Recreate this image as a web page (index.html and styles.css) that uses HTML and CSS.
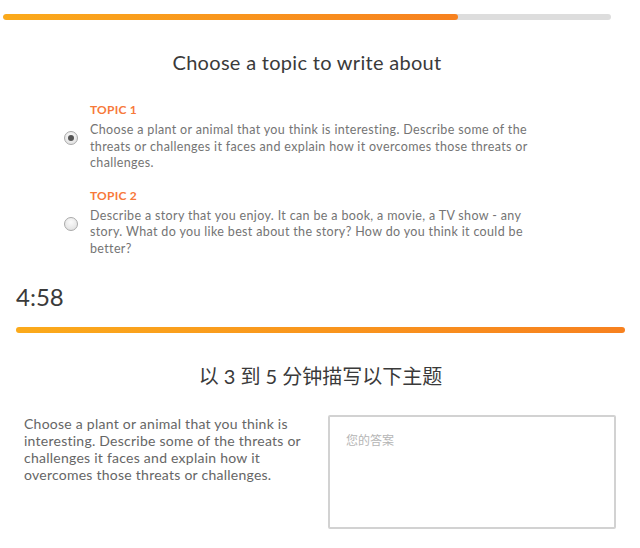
FILE: index.html
```html
<!DOCTYPE html>
<html lang="zh">
<head>
<meta charset="utf-8">
<title>Writing task</title>
<link rel="stylesheet" href="styles.css">
</head>
<body>
<section class="chooser">
  <div class="progress"><div class="progress-fill" style="width: 455px"></div></div>
  <h1 class="title">Choose a topic to write about</h1>
  <div class="topics">
    <label class="topic">
      <span class="topic-label">TOPIC 1</span>
      <span class="radio checked"></span>
      <span class="topic-text">Choose a plant or animal that you think is interesting. Describe some of the threats or challenges it faces and explain how it overcomes those threats or challenges.</span>
    </label>
    <label class="topic">
      <span class="topic-label">TOPIC 2</span>
      <span class="radio"></span>
      <span class="topic-text">Describe a story that you enjoy. It can be a book, a movie, a TV show - any story. What do you like best about the story? How do you think it could be better?</span>
    </label>
  </div>
</section>
<section class="writer">
  <div class="timer">4:58</div>
  <div class="timebar"></div>
  <h2 class="subtitle">以 3 到 5 分钟描写以下主题</h2>
  <div class="answer-row">
    <p class="prompt">Choose a plant or animal that you think is interesting. Describe some of the threats or challenges it faces and explain how it overcomes those threats or challenges.</p>
    <textarea class="answer" placeholder="您的答案"></textarea>
  </div>
</section>
</body>
</html>
```
FILE: styles.css
```css
html, body {
  margin: 0;
  padding: 0;
  background: #fff;
}
body {
  font-family: Lato, "Noto Sans CJK SC", sans-serif;
  color: #3d3d3d;
}
.chooser {
  width: 608px;
  margin-left: 3px;
  padding-top: 14px;
}
.progress {
  height: 6px;
  border-radius: 3px;
  background: #dddddd;
  overflow: hidden;
}
.progress-fill {
  height: 100%;
  border-radius: 3px;
  background: linear-gradient(90deg, #fbaa1b, #f7811f);
}
.title {
  margin: 30px 0 0;
  font-size: 20px;
  line-height: 24px;
  font-weight: 400;
  letter-spacing: 0.3px;
  text-align: center;
  color: #3a3a3a;
}
.topics {
  display: flex;
  flex-direction: column;
  gap: 16px;
  margin-top: 28px;
  padding-left: 61px;
}
.topic {
  display: grid;
  grid-template-columns: 14px 444px;
  column-gap: 12px;
  row-gap: 4px;
  cursor: pointer;
}
.topic-label {
  grid-column: 2;
  font-size: 12px;
  line-height: 16px;
  font-weight: 700;
  color: #f7793a;
  letter-spacing: 0.2px;
}
.radio {
  grid-column: 1;
  width: 14px;
  height: 14px;
  margin-top: 9px;
  box-sizing: border-box;
  border-radius: 50%;
  border: 1px solid #a9a9a9;
  background: radial-gradient(circle at 50% 35%, #fbfbfb, #dcdcdc);
  position: relative;
}
.radio.checked::after {
  content: "";
  position: absolute;
  left: 3px;
  top: 3px;
  width: 6px;
  height: 6px;
  border-radius: 50%;
  background: #555;
}
.topic-text {
  grid-column: 2;
  font-size: 12.5px;
  line-height: 16.5px;
  letter-spacing: 0.35px;
  color: #747474;
}
.writer {
  padding: 0 15px 0 16px;
}
.timer {
  margin-top: 26px;
  font-size: 24px;
  line-height: 28px;
  color: #3a3a3a;
}
.timebar {
  height: 6px;
  margin-top: 16px;
  border-radius: 3px;
  background: linear-gradient(90deg, #fbaa1b, #f7811f);
}
.subtitle {
  margin: 30px 0 0;
  font-size: 20px;
  line-height: 26px;
  font-weight: 400;
  text-align: center;
  color: #3a3a3a;
}
.answer-row {
  display: flex;
  justify-content: space-between;
  margin-top: 26px;
  padding: 0 9px 0 8px;
}
.prompt {
  width: 292px;
  margin: 0;
  font-size: 14px;
  line-height: 17px;
  letter-spacing: 0.25px;
  color: #666;
}
.answer {
  width: 288px;
  height: 114px;
  box-sizing: border-box;
  margin: 0;
  padding: 14px 16px;
  border: 2px solid #d2d2d2;
  border-radius: 2px;
  resize: none;
  font-family: "Noto Sans CJK SC", Lato, sans-serif;
  font-size: 12px;
  color: #444;
}
.answer::placeholder {
  color: #b5b5b5;
}
```
